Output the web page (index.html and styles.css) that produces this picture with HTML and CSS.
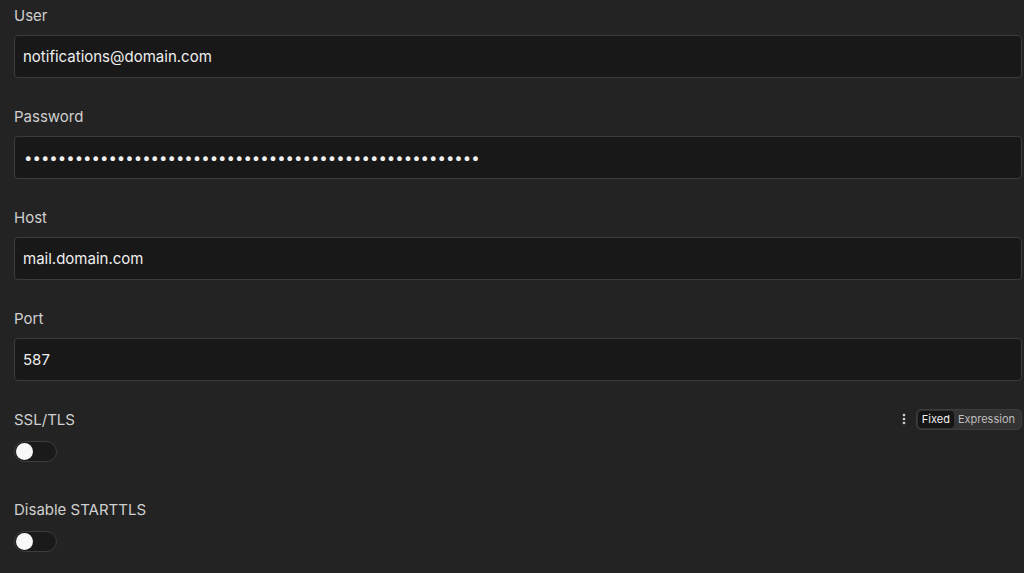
FILE: index.html
```html
<!DOCTYPE html>
<html>
<head>
<meta charset="utf-8">
<link rel="stylesheet" href="styles.css">
</head>
<body>
<div class="form">
  <div class="field">
    <div class="label-row"><span class="label">User</span></div>
    <div class="input">notifications@domain.com</div>
  </div>
  <div class="field">
    <div class="label-row"><span class="label">Password</span></div>
    <div class="input password">••••••••••••••••••••••••••••••••••••••••••••••••••••••</div>
  </div>
  <div class="field">
    <div class="label-row"><span class="label">Host</span></div>
    <div class="input">mail.domain.com</div>
  </div>
  <div class="field">
    <div class="label-row"><span class="label">Port</span></div>
    <div class="input">587</div>
  </div>
  <div class="field toggle-field">
    <div class="label-row">
      <span class="label">SSL/TLS</span>
      <div class="options">
        <svg class="kebab" width="4" height="12" viewBox="0 0 4 12"><circle cx="2" cy="2" r="1.3" fill="#d0d0d0"/><circle cx="2" cy="6" r="1.3" fill="#d0d0d0"/><circle cx="2" cy="10" r="1.3" fill="#d0d0d0"/></svg>
        <div class="segmented">
          <span class="seg active">Fixed</span>
          <span class="seg">Expression</span>
        </div>
      </div>
    </div>
    <div class="switch"><span class="knob"></span></div>
  </div>
  <div class="field toggle-field">
    <div class="label-row"><span class="label">Disable STARTTLS</span></div>
    <div class="switch"><span class="knob"></span></div>
  </div>
</div>
</body>
</html>
```

FILE: styles.css
```css
html, body {
  margin: 0;
  padding: 0;
  background: #232323;
  height: 100%;
  overflow: hidden;
}
body {
  font-family: Inter, "Noto Sans", sans-serif;
  -webkit-font-smoothing: antialiased;
}
.form {
  display: flex;
  flex-direction: column;
  padding: 5px 2px 0 14px;
}
.field {
  display: flex;
  flex-direction: column;
  gap: 10px;
  margin-bottom: 28px;
}
.label-row {
  display: flex;
  align-items: center;
  justify-content: space-between;
  height: 20px;
}
.label {
  font-size: 15px;
  line-height: 19px;
  padding-top: 1px;
  color: #d0d0d0;
}
.input {
  box-sizing: border-box;
  height: 43px;
  border: 1px solid #3b3b3b;
  border-radius: 4px;
  background: #181818;
  color: #efefef;
  font-size: 15px;
  line-height: 41px;
  padding: 0 8px;
  white-space: nowrap;
  overflow: hidden;
}
.password {
  letter-spacing: 0px;
  padding-left: 9px;
}
.toggle-field {
  gap: 12px;
  margin-bottom: 37px;
}
.options {
  display: flex;
  align-items: center;
  gap: 10px;
}
.kebab {
  display: block;
}
.segmented {
  display: flex;
  align-items: center;
  box-sizing: border-box;
  height: 21px;
  padding: 0 2px 0 1px;
  background: #333333;
  border: 1px solid #3c3c3c;
  border-radius: 5px;
  font-size: 11px;
}
.seg {
  padding: 0 4px;
  line-height: 17px;
  color: #bdbdbd;
  border-radius: 4px;
}
.seg.active {
  background: #151515;
  color: #f2f2f2;
}
.switch {
  box-sizing: border-box;
  width: 43px;
  height: 21px;
  border: 1px solid #3d3d3d;
  border-radius: 11px;
  background: #1a1a1a;
  padding: 1px;
  display: flex;
  align-items: center;
}
.knob {
  width: 17px;
  height: 17px;
  border-radius: 50%;
  background: #f8f8f8;
}
```
